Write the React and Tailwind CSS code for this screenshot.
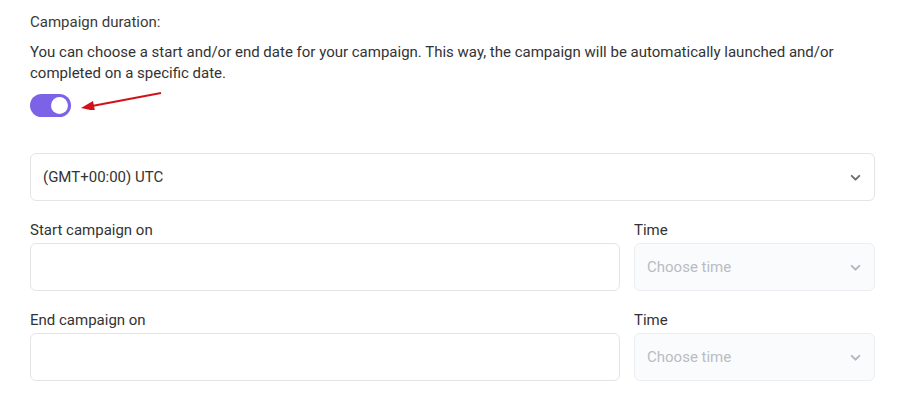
import { useState } from "react";

function Chevron({ className }) {
    return (
        <svg width="13" height="13" viewBox="0 0 12 12" className={className}>
            <polyline points="2.5,4.5 6,8 9.5,4.5" fill="none" stroke="currentColor" strokeWidth="1.8" strokeLinecap="round" strokeLinejoin="round" />
        </svg>
    );
}

function DateRow({ label }) {
    return (
        <div className="flex gap-[14px] mt-[19px]">
            <div className="flex-1">
                <div className="text-[15px] leading-[20px] text-[#333]">{label}</div>
                <div className="mt-[3px] h-[48px] rounded-[6px] border border-[#e3e4e8] bg-white"></div>
            </div>
            <div className="w-[241px]">
                <div className="text-[15px] leading-[20px] text-[#333]">Time</div>
                <div className="mt-[3px] h-[48px] rounded-[6px] border border-[#eceef1] bg-[#fafbfc] flex items-center justify-between pl-[12px] pr-[12px]">
                    <span className="text-[15px] text-[#b9bcc2]">Choose time</span>
                    <Chevron className="text-[#b3b6bc]" />
                </div>
            </div>
        </div>
    );
}

export default function App() {
    const [on, setOn] = useState(true);

    return (
        <div className="min-h-screen bg-white px-[30px] pt-[12px] font-['Roboto',sans-serif] w-[905px]">
            <div className="text-[15px] leading-[21px] text-[#3a3a3a]">Campaign duration:</div>
            <p className="mt-[9px] text-[15px] leading-[21px] text-[#333]">
                You can choose a start and/or end date for your campaign. This way, the campaign will be automatically launched and/or completed on a specific date.
            </p>

            <div className="relative mt-[10px] h-[23px]">
                <button
                    onClick={() => setOn(!on)}
                    className={"w-[41px] h-[23px] rounded-full flex items-center px-[3px] " + (on ? "bg-[#7b62e6] justify-end" : "bg-gray-300 justify-start")}
                >
                    <span className="w-[17px] h-[17px] rounded-full bg-white block"></span>
                </button>
                <svg className="absolute left-[45px] top-[-14px]" width="100" height="30" viewBox="75 80 100 30">
                    <line x1="161" y1="93" x2="92" y2="106" stroke="#d0121b" strokeWidth="2" />
                    <polygon points="81,108 93,101 95,111" fill="#d0121b" />
                </svg>
            </div>

            <div className="mt-[36px] h-[48px] rounded-[6px] border border-[#e3e4e8] flex items-center justify-between pl-[12px] pr-[12px]">
                <span className="text-[15px] text-[#333]">(GMT+00:00) UTC</span>
                <Chevron className="text-[#6b6f76]" />
            </div>

            <DateRow label="Start campaign on" />
            <DateRow label="End campaign on" />
        </div>
    );
}
